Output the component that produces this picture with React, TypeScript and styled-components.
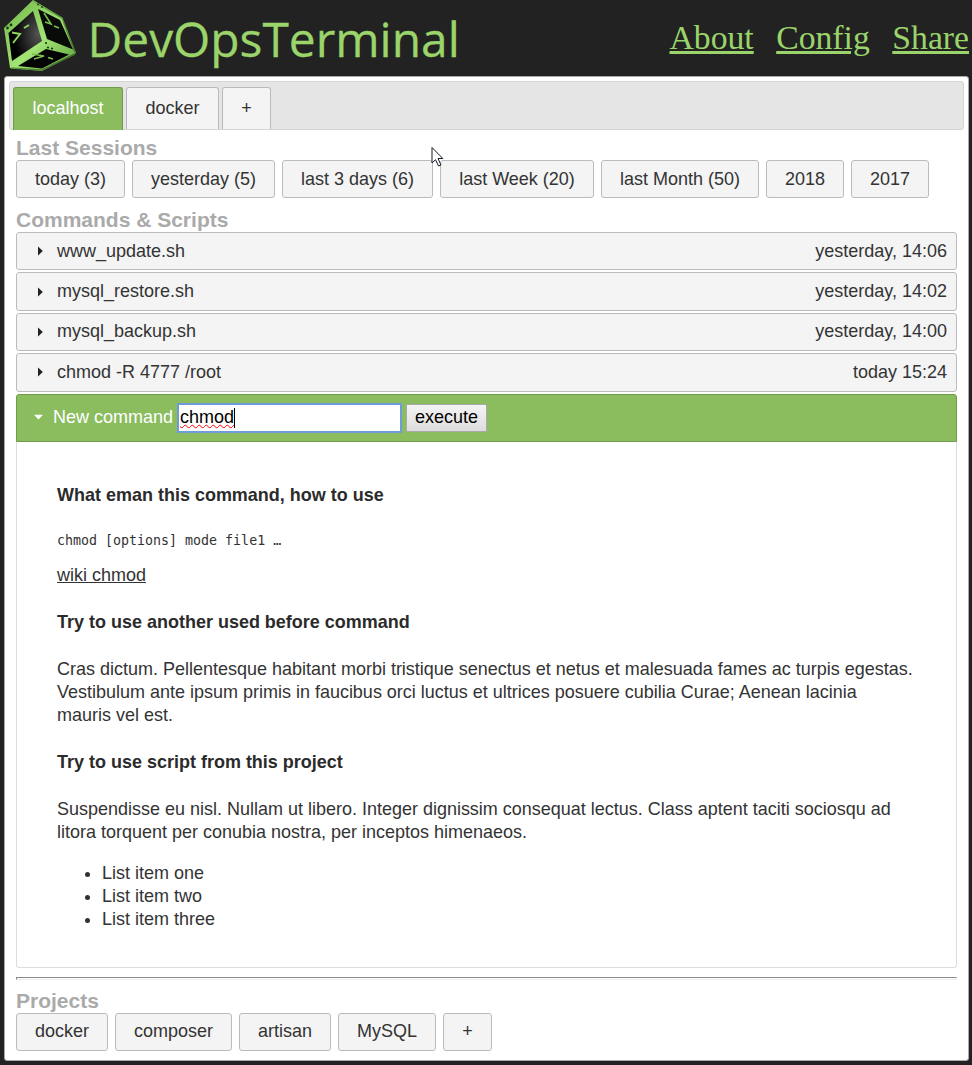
import React from "react";
import styled, { createGlobalStyle } from "styled-components";

const GlobalStyle = createGlobalStyle`
  * { box-sizing: border-box; }
  body {
    margin: 0;
    background: #222;
    color: #333;
    font: 17.99px/23px "Liberation Sans", Arial, sans-serif;
  }
`;

const Page = styled.div`
  display: flex;
  flex-direction: column;
  height: 1065px;
  width: 972px;
  overflow: hidden;
`;

const Header = styled.header`
  display: flex;
  height: 76px;
  padding: 0 3px 0 4px;
`;

const Logo = styled.svg`
  flex: none;
  width: 72px;
  height: 72px;
`;

const Brand = styled.div`
  flex: none;
  width: 380px;
  margin-left: 11.5px;
  color: #9bd46a;
  font: 47.9px/78px "Open Sans", sans-serif;
  -webkit-text-stroke: 0.3px #9bd46a;
  white-space: nowrap;
`;

const Menu = styled.nav`
  display: flex;
  gap: 22.5px;
  margin-left: auto;
`;

const MenuLink = styled.a`
  color: #9bd46a;
  font: 33.7px/76px "Liberation Serif", serif;
  text-decoration-line: underline;
  text-decoration-thickness: 3px;
  text-underline-offset: 2px;
`;

const Window = styled.main`
  width: 965px;
  height: 985px;
  margin-left: 4px;
  padding: 4px;
  background: #fff;
  border: 1px solid #aaa;
  border-radius: 3px;
`;

const TabBar = styled.div`
  display: flex;
  align-items: flex-end;
  gap: 3px;
  height: 49px;
  padding-left: 3px;
  background: #e5e5e5;
  border: 1px solid #d5d5d5;
  border-radius: 3px;
`;

const Tab = styled.button<{ $width: number; $active?: boolean }>`
  width: ${(p) => p.$width}px;
  height: ${(p) => (p.$active ? 43 : 42)}px;
  margin-bottom: ${(p) => (p.$active ? -1 : 0)}px;
  padding: 0 0 ${(p) => (p.$active ? 2 : 0)}px;
  font: inherit;
  color: ${(p) => (p.$active ? "#fff" : "#333")};
  background: ${(p) => (p.$active ? "#8bbd5f" : "#f4f4f4")};
  border: 1px solid ${(p) => (p.$active ? "#6f9c4b" : "#bbb")};
  border-bottom: 0;
  border-radius: 3px 3px 0 0;
`;

const Body = styled.div`
  padding: 6px 7px 0;
`;

const Heading = styled.h2`
  margin: 0;
  padding-bottom: 1px;
  color: #aaa;
  font-size: 21px;
  line-height: 23px;
`;

const ButtonRow = styled.div`
  display: flex;
  gap: 7px;
`;

const Button = styled.button<{ $width: number }>`
  width: ${(p) => p.$width}px;
  height: 38px;
  padding: 0;
  font: inherit;
  color: #333;
  background: #f4f4f4;
  border: 1px solid #bbb;
  border-radius: 3px;
`;

const Section = styled.section`
  margin-bottom: 10px;
`;

const Row = styled.div`
  display: flex;
  align-items: center;
  height: 38.4px;
  margin-bottom: 2px;
  padding: 0 9px 0 20px;
  background: #f4f4f4;
  border: 1px solid #bbb;
  border-radius: 3px;
`;

const Arrow = styled.svg`
  flex: none;
  width: 10px;
  height: 10px;
  margin-right: 10px;
`;

const Time = styled.time`
  margin-left: auto;
`;

const CommandBar = styled.form`
  display: flex;
  align-items: center;
  height: 48px;
  padding: 0 0 0 16px;
  color: #fff;
  background: #8bbd5f;
  border: 1px solid #6f9c4b;
  border-radius: 3px 3px 0 0;
`;

const CommandField = styled.div`
  display: flex;
  align-items: center;
  width: 225px;
  height: 30px;
  margin: 0 4px;
  padding-left: 1px;
  color: #000;
  background: #fff;
  border: 2px solid #6f9bdb;
`;

const Typed = styled.span`
  height: 20px;
  border-right: 1px solid #000;
  line-height: 19px;
  text-decoration: underline wavy #f00 1px;
  text-decoration-skip-ink: none;
`;

const Execute = styled.button`
  width: 81px;
  height: 28px;
  padding: 0;
  font: inherit;
  color: #000;
  background: linear-gradient(#f4f4f4, #ddd);
  border: 1px solid #a9a9a9;
`;

const Help = styled.article`
  height: 526px;
  padding: 42px 41.8px 0 40px;
  border: 1px solid #ddd;
  border-top: 0;
  border-radius: 0 0 3px 3px;

  h3 { margin: 0 0 24px; font-size: inherit; color: #2b2b2b; }
  p { margin: 0 0 24px; }
  ul { margin: -6px 0 0; padding-left: 45px; }
  pre { margin: -1px 0 12px; font: 13.3px/22px "DejaVu Sans Mono", monospace; }
`;

const WikiLink = styled.a`
  display: inline-block;
  margin-bottom: 24px;
  text-decoration: underline;
`;

const Divider = styled.hr`
  height: 3px;
  margin: 9px 0 9px;
  border: 1px solid;
  border-color: #888 #eee #eee #888;
`;

const Pointer = styled.svg`
  position: absolute;
  left: 431px;
  top: 146px;
  width: 13px;
  height: 21px;
`;

const sessions: [string, number][] = [
  ["today (3)", 109], ["yesterday (5)", 143], ["last 3 days (6)", 151],
  ["last Week (20)", 154], ["last Month (50)", 158], ["2018", 78], ["2017", 78],
];

const projects: [string, number][] = [
  ["docker", 92], ["composer", 117], ["artisan", 92], ["MySQL", 98], ["+", 49],
];

const scripts = [
  ["www_update.sh", "yesterday, 14:06"],
  ["mysql_restore.sh", "yesterday, 14:02"],
  ["mysql_backup.sh", "yesterday, 14:00"],
  ["chmod -R 4777 /root", "today 15:24"],
];

function CubeLogo() {
  return (
    <Logo viewBox="4 0 72 72">
      <defs>
        <linearGradient id="edge" x1="0" y1="0" x2="1" y2="1">
          <stop offset="0" stopColor="#6fb548" />
          <stop offset="0.55" stopColor="#a3e475" />
          <stop offset="1" stopColor="#5a9e38" />
        </linearGradient>
        <radialGradient id="face" cx="0.9" cy="0.45" r="0.75">
          <stop offset="0" stopColor="#555" />
          <stop offset="1" stopColor="#000" />
        </radialGradient>
        <linearGradient id="rim" x1="0" y1="0" x2="1" y2="1">
          <stop offset="0" stopColor="#83c859" />
          <stop offset="1" stopColor="#376423" />
        </linearGradient>
      </defs>
      <path d="M33 0 62 18 76 53 42 71 10 68 4 28Z" fill="url(#edge)" />
      <path d="M33 1 62 18 75 52M75 54 42 70 11 68" fill="none" stroke="url(#rim)" strokeWidth="1.5" />
      <path d="M33 11 8.5 33 12 61 42 41Z" fill="url(#face)" />
      <path d="M38 9 60 20 73 49.5 47 39Z" fill="#080b07" />
      <path d="M18 66 46 49 69 54.5 42 68.5Z" fill="#030403" />
      <path d="M12 32.5 20 34 13 43M24 28 29 25" fill="none" stroke="#8dd45d" strokeWidth="2" />
      <path d="M44 13 51 24 45 22M54 26 59 28M32 54 44 56 34 59M48 57.5 53 59" fill="none" stroke="#79bd4f" strokeWidth="1.6" />
      <g fill="#1d3a12">
        <circle cx="7.5" cy="28" r="1.4" /><circle cx="11" cy="25" r="1.4" />
        <circle cx="46" cy="43" r="1.1" /><circle cx="48" cy="47.5" r="1.1" /><circle cx="52" cy="48.5" r="1.1" />
        <circle cx="38" cy="4.5" r="0.9" /><circle cx="42" cy="7" r="0.9" />
      </g>
    </Logo>
  );
}

export default function App() {
  return (
    <Page>
      <GlobalStyle />
      <Header>
        <CubeLogo />
        <Brand>DevOpsTerminal</Brand>
        <Menu>
          <MenuLink>About</MenuLink>
          <MenuLink>Config</MenuLink>
          <MenuLink>Share</MenuLink>
        </Menu>
      </Header>
      <Window>
        <TabBar>
          <Tab $width={110} $active>localhost</Tab>
          <Tab $width={93}>docker</Tab>
          <Tab $width={49}>+</Tab>
        </TabBar>
        <Body>
          <Section>
            <Heading>Last Sessions</Heading>
            <ButtonRow>
              {sessions.map(([label, width]) => <Button key={label} $width={width}>{label}</Button>)}
            </ButtonRow>
          </Section>
          <Heading>Commands &amp; Scripts</Heading>
          {scripts.map(([name, time]) => (
            <Row key={name}>
              <Arrow viewBox="0 0 10 10"><path d="M1 0.5V9.5L5.8 5Z" fill="#222" /></Arrow>
              <span>{name}</span>
              <Time>{time}</Time>
            </Row>
          ))}
          <CommandBar>
            <Arrow viewBox="0 0 10 10"><path d="M1 1.8H10L5.5 6.5Z" fill="#fff" /></Arrow>
            <span>New command</span>
            <CommandField><Typed>chmod</Typed></CommandField>
            <Execute type="button">execute</Execute>
          </CommandBar>
          <Help>
            <h3>What eman this command, how to use</h3>
            <pre>chmod [options] mode file1 …</pre>
            <WikiLink>wiki chmod</WikiLink>
            <h3>Try to use another used before command</h3>
            <p>Cras dictum. Pellentesque habitant morbi tristique senectus et netus et malesuada fames ac turpis egestas. Vestibulum ante ipsum primis in faucibus orci luctus et ultrices posuere cubilia Curae; Aenean lacinia mauris vel est.</p>
            <h3>Try to use script from this project</h3>
            <p>Suspendisse eu nisl. Nullam ut libero. Integer dignissim consequat lectus. Class aptent taciti sociosqu ad litora torquent per conubia nostra, per inceptos himenaeos.</p>
            <ul>
              <li>List item one</li>
              <li>List item two</li>
              <li>List item three</li>
            </ul>
          </Help>
          <Divider />
          <Heading>Projects</Heading>
          <ButtonRow>
            {projects.map(([label, width]) => <Button key={label} $width={width}>{label}</Button>)}
          </ButtonRow>
        </Body>
      </Window>
      <Pointer viewBox="0 0 13 21">
        <path d="M1 1.5V17L4.5 13.7 7.5 20 10 19 7 12.5H11.8Z" fill="#fff" stroke="#101828" />
      </Pointer>
    </Page>
  );
}
